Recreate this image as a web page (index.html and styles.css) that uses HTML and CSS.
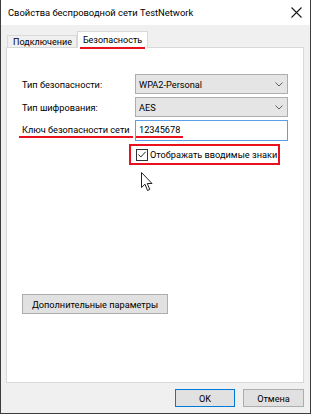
FILE: index.html
```html
<!DOCTYPE html>
<html lang="ru">
<head>
<meta charset="utf-8">
<link rel="stylesheet" href="styles.css">
</head>
<body>
<div class="window">
  <div class="titlebar">
    <span class="title">Свойства беспроводной сети TestNetwork</span>
    <svg class="close" width="11" height="11" viewBox="0 0 11 11"><path d="M0.5 0.5 L10.5 10.5 M10.5 0.5 L0.5 10.5" stroke="#1a1a1a" stroke-width="1.1" fill="none"/></svg>
  </div>
  <div class="body">
    <div class="tabs">
      <div class="tab">Подключение</div>
      <div class="tab active"><span class="mark">Безопасность</span></div>
    </div>
    <div class="panel">
      <div class="form">
        <div class="label">Тип безопасности:</div>
        <div class="select"><span>WPA2-Personal</span><svg width="8" height="5" viewBox="0 0 8 5"><path d="M0.5 0.5 L4 4 L7.5 0.5" stroke="#606060" stroke-width="1" fill="none"/></svg></div>
        <div class="label">Тип шифрования:</div>
        <div class="select"><span>AES</span><svg width="8" height="5" viewBox="0 0 8 5"><path d="M0.5 0.5 L4 4 L7.5 0.5" stroke="#606060" stroke-width="1" fill="none"/></svg></div>
        <div class="label key"><span class="mark">Ключ безопасности сети</span></div>
        <div class="input"><span class="mark">12345678</span></div>
      </div>
      <div class="checkrow">
        <div class="highlight">
          <span class="checkbox"><svg width="11" height="11" viewBox="0 0 11 11"><path d="M1.5 5.5 L4.2 8.2 L9.5 2.5" stroke="#222" stroke-width="1.1" fill="none"/></svg></span>
          <span>Отображать вводимые знаки</span>
        </div>
        <svg class="cursor" width="13" height="20" viewBox="0 0 13 20"><path d="M0.5 0.5 L0.5 15.5 L4 12.2 L6.5 18.5 L8.8 17.5 L6.3 11.5 L11 11.5 Z" fill="#fff" stroke="#222" stroke-width="1"/></svg>
      </div>
      <div class="spacer"></div>
      <div class="advanced"><button class="btn">Дополнительные параметры</button></div>
    </div>
    <div class="footer">
      <button class="btn ok">OK</button>
      <button class="btn cancel">Отмена</button>
    </div>
  </div>
</div>
</body>
</html>
```
FILE: styles.css
```css
* { box-sizing: border-box; }
html, body { margin: 0; padding: 0; }
body {
  font-family: Roboto, "Liberation Sans", sans-serif;
  font-size: 9.2px;
  color: #000;
  background: #fff;
  white-space: nowrap;
}
.window {
  width: 311px;
  height: 414px;
  border: 1px solid #3d3d3d;
  border-top: none;
  background: #f0f0f0;
  display: flex;
  flex-direction: column;
}
.titlebar {
  height: 25px;
  background: #fff;
  display: flex;
  align-items: center;
  justify-content: space-between;
  padding: 0 8px 0 7px;
  font-size: 9.4px;
  flex-shrink: 0;
}
.title { color: #000; }
.body {
  flex: 1;
  display: flex;
  flex-direction: column;
  padding: 6px 6px 0 5px;
}
.tabs {
  display: flex;
  align-items: flex-end;
  height: 16px;
  padding-left: 1px;
  position: relative;
  z-index: 1;
}
.tab {
  height: 12px;
  border: 1px solid #d9d9d9;
  border-bottom: none;
  padding: 0 4px 0 5px;
  line-height: 12px;
  background: #f0f0f0;
  font-size: 9px;
}
.tab.active {
  height: 17px;
  background: #fff;
  margin-bottom: -1px;
  padding: 2px 5px 0 5px;
  line-height: 13px;
}
.mark {
  display: inline-block;
  border-bottom: 2px solid #e8111d;
  padding: 0 3px;
  margin: 0 -3px;
  line-height: 13px;
}
.panel {
  height: 336px;
  background: #fff;
  border: 1px solid #d9d9d9;
  display: flex;
  flex-direction: column;
  padding: 26px 14px 0 14px;
}
.form {
  display: grid;
  grid-template-columns: 114px 153px;
  grid-auto-rows: 20px;
  row-gap: 3px;
  align-items: center;
}
.label { padding-left: 1px; }
.select {
  height: 20px;
  background: #e5e5e5;
  border: 1px solid #adadad;
  display: flex;
  align-items: center;
  justify-content: space-between;
  padding: 0 4px 0 3px;
}
.input {
  height: 21px;
  background: #fff;
  border: 1px solid #5aa0e6;
  padding: 0 3px;
  display: flex;
  align-items: center;
}
.checkrow {
  position: relative;
  display: flex;
  padding-left: 108px;
  margin-top: 4px;
}
.highlight {
  display: flex;
  align-items: center;
  width: 151px;
  height: 21px;
  border: 2px solid #e8111d;
  padding-left: 5px;
  gap: 2px;
}
.checkbox {
  width: 12px;
  height: 12px;
  border: 1px solid #333;
  background: #fff;
  display: flex;
  align-items: center;
  justify-content: center;
}
.spacer { flex: 1; }
.advanced { height: 88px; padding-left: 1px; }
.btn {
  font-family: inherit;
  font-size: 9.2px;
  height: 20px;
  background: #e1e1e1;
  border: 1px solid #adadad;
  padding: 0;
  color: #000;
}
.advanced .btn { width: 146px; }
.footer {
  display: flex;
  justify-content: flex-end;
  gap: 8px;
  padding-top: 6px;
}
.ok { width: 60px; height: 18px; border: 1px solid #0078d7; }
.cancel { width: 61px; height: 18px; }
.cursor {
  position: absolute;
  left: 120px;
  top: 28px;
}
```
